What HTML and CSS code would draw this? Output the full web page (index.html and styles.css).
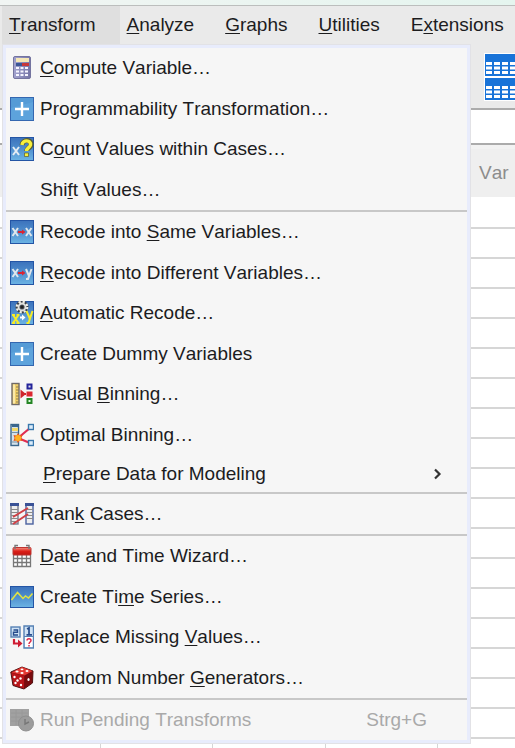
FILE: index.html
```html
<!DOCTYPE html>
<html lang="en">
<head>
<meta charset="utf-8">
<title>Data Editor</title>
<link rel="stylesheet" href="styles.css">
</head>
<body>
<svg class="defs" aria-hidden="true">
  <defs>
    <linearGradient id="blue" x1="0" y1="0" x2="0" y2="1">
      <stop offset="0" stop-color="#3c72bc"/><stop offset=".45" stop-color="#4d8ccc"/><stop offset="1" stop-color="#6cb4e4"/>
    </linearGradient>
    <linearGradient id="calc" x1="0" y1="0" x2="1" y2="0">
      <stop offset="0" stop-color="#a3a3cf"/><stop offset="1" stop-color="#7575a6"/>
    </linearGradient>
    <linearGradient id="red" x1="0" y1="0" x2="0" y2="1">
      <stop offset="0" stop-color="#f49080"/><stop offset=".5" stop-color="#dc2018"/><stop offset="1" stop-color="#c01410"/>
    </linearGradient>
    <symbol id="plus" viewBox="0 0 24 24">
      <rect x=".5" y=".5" width="23" height="23" fill="#559bd6" stroke="#3467b0"/>
      <path d="M1 23V11l22-6v18z" fill="#62a9df" opacity=".6"/>
      <path d="M12 5v14M5 12h14" stroke="#fff" stroke-width="2.4"/>
    </symbol>
    <symbol id="tile" viewBox="0 0 24 24">
      <rect x=".5" y=".5" width="23" height="23" fill="url(#blue)" stroke="#2455a5"/>
    </symbol>
  </defs>
</svg>
<div class="titlebar"></div>
<header class="menubar">
  <button class="top open" type="button" aria-expanded="true"><u>T</u>ransform</button>
  <button class="top" type="button"><u>A</u>nalyze</button>
  <button class="top" type="button"><u>G</u>raphs</button>
  <button class="top" type="button"><u>U</u>tilities</button>
  <button class="top" type="button">E<u>x</u>tensions</button>

  <div class="menu" role="menu">
    <ul class="group">
      <li><button class="item" type="button">
        <svg class="icon" viewBox="0 0 24 24"><rect x="3.5" y=".5" width="17" height="22" rx="1.5" fill="url(#calc)" stroke="#74749f"/><path d="M6 2h13v4H6z" fill="#f5e7b6"/><path d="M6 7h6v3H6z" fill="#3b5595"/><path d="M12 7h7v3h-7z" fill="#c8383a"/><path d="M6 11h3v2H6zM10.500 11h3v2h-3zM15 11h3v2h-3zM6 14.500h3v2H6zM10.500 14.500h3v2h-3zM15 14.500h3v2h-3zM6 18h3v2H6zM10.500 18h3v2h-3zM15 18h3v2h-3z" fill="#f6f6ff"/></svg>
        <span><u>C</u>ompute Variable…</span></button></li>
      <li><button class="item" type="button">
        <svg class="icon"><use href="#plus"/></svg>
        <span>Programmability Transformation…</span></button></li>
      <li><button class="item" type="button">
        <svg class="icon" viewBox="0 0 24 24"><use href="#tile"/><path d="M3 10l6 8M9 10l-6 8" stroke="#e4ecf4" stroke-width="2"/><path d="M12 8c.5-6 10-6 9 0-.5 3-4.500 3-4.500 6" fill="none" stroke="#565b35" stroke-width="5"/><path d="M12 8c.5-5.500 9.500-5.500 8.500 0-.5 2.500-4 3-4 6" fill="none" stroke="#f7f03c" stroke-width="3.400"/><path d="M14.500 16h4v3.500h-4z" fill="#f7f03c" stroke="#565b35" stroke-width=".7"/></svg>
        <span>C<u>o</u>unt Values within Cases…</span></button></li>
      <li><button class="item" type="button">
        <span class="icon"></span>
        <span>Shi<u>f</u>t Values…</span></button></li>
    </ul>
    <ul class="group">
      <li><button class="item" type="button">
        <svg class="icon" viewBox="0 0 24 24"><use href="#tile"/><path d="M2.500 8l5.500 8M8 8l-5.500 8M16 8l5.500 8M21.500 8L16 16" stroke="#dfe6ec" stroke-width="2"/><path d="M8 11h4V9.500l3.500 2.500-3.500 2.500V13H8z" fill="#dc2432"/></svg>
        <span>Recode into <u>S</u>ame Variables…</span></button></li>
      <li><button class="item" type="button">
        <svg class="icon" viewBox="0 0 24 24"><use href="#tile"/><path d="M2.500 8l5.500 8M8 8l-5.500 8M16 8l3 7M21.500 8l-3.500 10h-2" fill="none" stroke="#dfe6ec" stroke-width="2"/><path d="M8 11h4V9.500l3.500 2.500-3.500 2.500V13H8z" fill="#dc2432"/></svg>
        <span><u>R</u>ecode into Different Variables…</span></button></li>
      <li><button class="item" type="button">
        <svg class="icon" viewBox="0 0 24 24"><use href="#tile"/><circle cx="12" cy="6" r="4" fill="#59606a" stroke="#3b4048"/><circle cx="12" cy="6" r="5.300" fill="none" stroke="#3b4048" stroke-width="2.400"/><circle cx="12" cy="6" r="5.300" fill="none" stroke="#f0f0ea" stroke-width="2.200" stroke-dasharray="2.200 1.960"/><circle cx="12" cy="6" r="3.500" fill="none" stroke="#e2e2de" stroke-width="1.800"/><circle cx="12" cy="6" r="1.800" fill="#222"/><path d="M3 14l5.500 8M8.500 14L3 22M2 14h3M6.500 14h3M2 22h3M6.500 22h3M16.500 10l3.500 8M22.500 10l-4 12h-2" fill="none" stroke="#f5ec25" stroke-width="2"/><path d="M10 15.500h2v-2l3.500 3L12 19.500v-2h-2z" fill="#fff"/></svg>
        <span><u>A</u>utomatic Recode…</span></button></li>
      <li><button class="item" type="button">
        <svg class="icon"><use href="#plus"/></svg>
        <span>Create Dummy Variables</span></button></li>
      <li><button class="item" type="button">
        <svg class="icon" viewBox="0 0 24 24"><rect x="2" y="1.500" width="7" height="21" fill="#f0cf68" stroke="#6f6a68" stroke-width="1.400"/><path d="M3 2.500h2v19H3z" fill="#fae9a8"/><path d="M6 5h3M6 8h3M6 11h3M6 14h3M6 17h3M6 20h3" stroke="#8d7c50"/><path d="M10.500 7.500l5.500 4.500-5.500 4.500z" fill="#cf252b"/><path d="M14 12h2" stroke="#cf252b" stroke-width="2"/><rect x="17.500" y="2.500" width="4" height="4" fill="#dde" stroke="#24249a" stroke-width="2"/><path d="M16.500 9.500h6v5h-6z" fill="#dc2830"/><rect x="17.500" y="17" width="4" height="4" fill="#dfd" stroke="#258525" stroke-width="2"/></svg>
        <span>Visual <u>B</u>inning…</span></button></li>
      <li><button class="item" type="button">
        <svg class="icon" viewBox="0 0 24 24"><rect x="1" y="1.500" width="7.500" height="21" fill="#d5e2ea" stroke="#3a668c" stroke-width="1.400"/><path d="M2 2h6v2H2z" fill="#3a668c"/><path d="M2 5h6v3H2z" fill="#f3d968"/><path d="M2 9.500h6M2 19h6" stroke="#7892a4"/><path d="M8 15l12-10M8 15l12 5" stroke="#e02c52" stroke-width="2.200"/><rect x="18.500" y="1.500" width="5" height="5" fill="#dbecfa" stroke="#3977ac" stroke-width="1.400"/><rect x="18.500" y="17.500" width="5" height="5" fill="#dbecfa" stroke="#3977ac" stroke-width="1.400"/><path d="M8 10l1.500 2.500 3-.5-1 3 1 3-3-.5L8 20l-1.500-2.500-3 .5 1-3-1-3 3 .5z" fill="#ee5a19"/><circle cx="8" cy="15" r="3" fill="#ffb322"/></svg>
        <span>Opt<u>i</u>mal Binning…</span></button></li>
      <li><button class="item submenu" type="button" aria-haspopup="true">
        <span class="icon"></span>
        <span><u>P</u>repare Data for Modeling</span>
        <svg class="chevron" viewBox="0 0 8 12"><path d="M1 1.500L5.500 6 1 10.500" fill="none" stroke="#333" stroke-width="2.200"/></svg></button></li>
    </ul>
    <ul class="group">
      <li><button class="item" type="button">
        <svg class="icon" viewBox="0 0 24 24"><rect x="1" y="2" width="7" height="20" fill="#eee" stroke="#75798a" stroke-width="1.400"/><rect x="16" y="2" width="7" height="20" fill="#eee" stroke="#4b61a0" stroke-width="1.400"/><path d="M0 1h9v3H0zM15 1h9v3h-9z" fill="#3a5296"/><path d="M1 7.500h7M1 10.500h7M1 13.500h7M1 16.500h7M1 19.500h7M16 7.500h7M16 10.500h7M16 13.500h7M16 16.500h7" stroke="#8a8a8a"/><path d="M3 15L18 6M3 22L18 12" stroke="#d04046" stroke-width="2"/></svg>
        <span>Ran<u>k</u> Cases…</span></button></li>
    </ul>
    <ul class="group">
      <li><button class="item" type="button">
        <svg class="icon" viewBox="0 0 24 24"><path d="M4 12h17v10H4z" fill="#fff"/><path d="M3.500 10v12.500h17V10M3.500 14.500h17M3.500 18.500h17M7.500 11v11M12 11v11M16.500 11v11" fill="none" stroke="#777" stroke-width="1.300"/><rect x="3" y="3.500" width="18" height="7.500" rx="1" fill="url(#red)" stroke="#bd3430"/><path d="M5 5V1.500h3M19 5V1.500h-3" fill="none" stroke="#777" stroke-width="1.400"/></svg>
        <span><u>D</u>ate and Time Wizard…</span></button></li>
      <li><button class="item" type="button">
        <svg class="icon" viewBox="0 0 24 24"><rect x=".5" y="1.500" width="23" height="21" fill="url(#blue)" stroke="#2455a5"/><path d="M1.500 15l6-7.500 5.500 6 2.500-2.500 3 2 4-4.500" fill="none" stroke="#e3e340" stroke-width="1.500"/></svg>
        <span>Create Ti<u>m</u>e Series…</span></button></li>
      <li><button class="item" type="button">
        <svg class="icon" viewBox="0 0 24 24"><rect x="1" y="2" width="9" height="10" fill="#cfe2f4" stroke="#5681b4" stroke-width="1.400"/><path d="M3.500 5h4v2.200h-4V10h4.500" fill="none" stroke="#264c8c" stroke-width="1.400"/><path d="M14 1h9.500v22H14z" fill="#cfe2f4" stroke="#5681b4" stroke-width="1.400"/><path d="M15 12h7.500v10H15z" fill="#fff"/><path d="M17 4l2-1v6.500M16.500 9.800H22" fill="none" stroke="#264c8c" stroke-width="1.700"/><path d="M14 11.500h9" stroke="#5681b4"/><path d="M17 15.500c0-2.500 4-2.500 4 0 0 1.500-2 1.500-2 3.500M19 20v1.500" fill="none" stroke="#dc2747" stroke-width="1.500"/><path d="M4 14v4.500h5" fill="none" stroke="#d01d33" stroke-width="2.200"/><path d="M8 14.500l4.500 4-4.500 4z" fill="#d01d33"/></svg>
        <span>Replace Missing <u>V</u>alues…</span></button></li>
      <li><button class="item" type="button">
        <svg class="icon" viewBox="0 0 24 24"><path d="M12 1l11 4-.5 12L14 23 3 19.500 0.800 6z" fill="#8e0d10" stroke="#4d1313"/><path d="M12 1l10.500 4-8 4.500L1.500 6.500z" fill="#e23832"/><path d="M1.500 7l13 3-.5 12.500L3.500 19z" fill="#b9161a"/><path d="M14.500 10L22.500 5.500 22 16.500l-8 6z" fill="#790b0e"/><g fill="#fff"><ellipse cx="7" cy="5.500" rx="1.600" ry="1"/><ellipse cx="12" cy="3.300" rx="1.500" ry=".9"/><ellipse cx="12" cy="7" rx="1.600" ry="1"/><ellipse cx="17" cy="5" rx="1.500" ry=".9"/><circle cx="4.500" cy="11" r="1.200"/><circle cx="10.500" cy="12.500" r="1.200"/><circle cx="7.500" cy="14.500" r="1.200"/><circle cx="5.500" cy="17" r="1.200"/><circle cx="11" cy="19" r="1.200"/><ellipse cx="18.500" cy="13.500" rx="1.100" ry="1.600"/></g></svg>
        <span>Random Number <u>G</u>enerators…</span></button></li>
    </ul>
    <ul class="group">
      <li><button class="item" type="button" disabled>
        <svg class="icon" viewBox="0 0 24 24"><path d="M0 1h19v17H0z" fill="#a1a1a1"/><path d="M1 5h17M1 9h17M1 13h17M6 2v15M12 2v15" stroke="#989898"/><circle cx="16" cy="15.500" r="7.500" fill="#9c9c9c" stroke="#8f8f8f"/><path d="M15 11v5l4-2" fill="none" stroke="#777" stroke-width="1.400"/></svg>
        <span>Run Pending Transforms</span>
        <kbd>Strg+G</kbd></button></li>
    </ul>
  </div>
</header>
<main class="editor">
<div class="toolbar">
  <button class="tool" type="button" aria-label="Split file">
    <svg viewBox="0 0 31 48"><path d="M0 0h31v48H0z" fill="#fff"/><path d="M1 1h30v22H1zM1 25h30v22H1z" fill="#1873d8"/><path d="M2 10.500h29M2 15h29M2 19.500h29M2 34.500h29M2 39h29M2 43.500h29" stroke="#fff" stroke-width="3" stroke-dasharray="6 2"/></svg>
  </button>
</div>
<div class="cellbar"><input type="text" aria-label="Cell value"></div>
<table class="grid">
  <thead><tr><th></th><th></th><th></th><th></th><th>Var</th></tr></thead>
  <tbody>
    <tr><td></td><td></td><td></td><td></td><td></td></tr>
    <tr><td></td><td></td><td></td><td></td><td></td></tr>
    <tr><td></td><td></td><td></td><td></td><td></td></tr>
    <tr><td></td><td></td><td></td><td></td><td></td></tr>
    <tr><td></td><td></td><td></td><td></td><td></td></tr>
    <tr><td></td><td></td><td></td><td></td><td></td></tr>
    <tr><td></td><td></td><td></td><td></td><td></td></tr>
    <tr><td></td><td></td><td></td><td></td><td></td></tr>
    <tr><td></td><td></td><td></td><td></td><td></td></tr>
    <tr><td></td><td></td><td></td><td></td><td></td></tr>
    <tr><td></td><td></td><td></td><td></td><td></td></tr>
    <tr><td></td><td></td><td></td><td></td><td></td></tr>
    <tr><td></td><td></td><td></td><td></td><td></td></tr>
    <tr><td></td><td></td><td></td><td></td><td></td></tr>
    <tr><td></td><td></td><td></td><td></td><td></td></tr>
    <tr><td></td><td></td><td></td><td></td><td></td></tr>
    <tr><td></td><td></td><td></td><td></td><td></td></tr>
    <tr><td></td><td></td><td></td><td></td><td></td></tr>
    <tr><td></td><td></td><td></td><td></td><td></td></tr>
  </tbody>
</table>
</main>
</body>
</html>
```

FILE: styles.css
```css
* { box-sizing: border-box; }

body {
  display: flex;
  flex-direction: column;
  height: 100vh;
  margin: 0;
  overflow: hidden;
  background: #fff;
  color: #1c1c1e;
  font: 19px/24px "Liberation Sans", Arial, sans-serif;
  font-kerning: none;
}

button, input, kbd { font: inherit; font-kerning: inherit; color: inherit; }

button {
  border: 0;
  margin: 0;
  padding: 0;
  background: none;
  text-align: left;
  white-space: nowrap;
}

u {
  text-decoration-thickness: 1px;
  text-underline-offset: 2px;
  text-decoration-skip-ink: none;
}

.defs { position: absolute; width: 0; height: 0; }

.titlebar {
  flex: none;
  height: 6px;
  background: linear-gradient(90deg, #f1f5f3, #e5f5ef);
  border-bottom: 1px solid #bcbebd;
}

.menubar {
  position: relative;
  z-index: 1;
  display: flex;
  flex: none;
  height: 38px;
  padding-left: 2px;
  background: #eaeaea;
}

.top { padding: 0 24px 0 7px; }
.top:nth-child(5) { padding-right: 0; }
.top.open { background: #dfdfdf; }

.menu {
  position: absolute;
  top: 100%;
  left: 2px;
  width: 469px;
  border: 1px solid #e2e2e6;
  outline: 3px solid #e8ecfc;
  outline-offset: -4px;
  padding: 3px;
  background: #f6f6f6;
}

.group { list-style: none; margin: 0; padding: 0; }
.group + .group { border-top: 2px solid #c8c8c8; }

.item {
  display: flex;
  align-items: center;
  gap: 6px;
  width: 100%;
  height: 40px;
  padding: 0 40px 0 4px;
}

li:nth-child(even) .item { height: 41px; }
.item.submenu { height: 37px; gap: 9px; padding-right: 25px; }
.item:disabled { color: #a9a9a9; }

.icon { flex: none; width: 24px; height: 24px; }
.chevron { width: 8px; height: 12px; margin-left: auto; }
kbd { margin-left: auto; }

.editor { flex: 1; min-height: 0; overflow: hidden; }

.toolbar {
  display: flex;
  justify-content: flex-end;
  height: 64px;
  padding-top: 9px;
  background: #eaeaea;
}

.tool { width: 31px; height: 48px; }
.tool svg { display: block; }

.cellbar {
  height: 41px;
  padding-bottom: 4px;
  background: #f2f2f2;
}

.cellbar input {
  display: block;
  width: 100%;
  height: 37px;
  border: solid #ababab;
  border-width: 2px 0;
  background: #fff;
}

.grid {
  width: 550px;
  table-layout: fixed;
  border-collapse: separate;
  border-spacing: 0;
}

th, td { padding: 0; }
th:first-child { width: 101px; }

th {
  height: 48px;
  background: #efefef;
  color: #8c8c8c;
  font-weight: normal;
}

td {
  height: 30px;
  border: solid #d6d6d6;
  border-width: 0 1px 2px 0;
}

tbody tr:first-child td { height: 32px; }
```
